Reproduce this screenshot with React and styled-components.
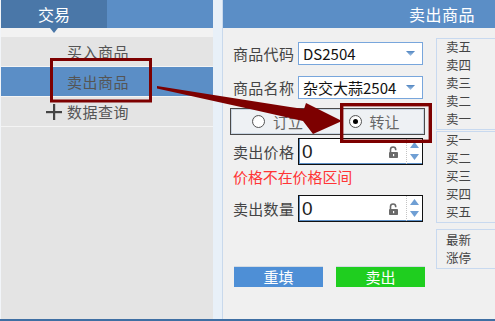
import styled, { createGlobalStyle } from "styled-components";

const COLORS = {
  headerBlue: "#5b8ec6",
  tabBlue: "#4a77a8",
  menuGray: "#e4e4e4",
  panelBg: "#f0f0f0",
  strip: "#e8f0f8",
  text: "#555",
  annotation: "#7d0000",
  quoteBorder: "#c8d9ef",
};

const GlobalStyle = createGlobalStyle`
  html, body {
    margin: 0;
    padding: 0;
    background: ${COLORS.strip};
  }
  body {
    font-family: "Noto Sans CJK SC", "Noto Sans", sans-serif;
  }
`;

const sellQuotes = ["卖五", "卖四", "卖三", "卖二", "卖一"];
const buyQuotes = ["买一", "买二", "买三", "买四", "买五"];

const DropTriangle = () => (
  <svg width="9" height="5" viewBox="0 0 9 5">
    <defs>
      <linearGradient id="dt" x1="0" y1="0" x2="0" y2="1">
        <stop offset="0" stopColor="#4f84c0" />
        <stop offset="1" stopColor="#a9c7e8" />
      </linearGradient>
    </defs>
    <polygon points="0,0 9,0 4.5,5" fill="url(#dt)" />
  </svg>
);

const OpenLock = () => (
  <svg width="11" height="12" viewBox="0 0 11 12">
    <path d="M2.5 6 V3.6 a2.6 2.6 0 0 1 5.2 0 V4.2" fill="none" stroke="#6a6a6a" strokeWidth="1.6" />
    <rect x="1" y="6" width="9" height="6" rx="0.8" fill="#6a6a6a" />
    <rect x="5" y="8" width="1.2" height="2.2" fill="#fff" />
  </svg>
);

const SpinArrow = ({ down }) => (
  <svg width="9" height="6" viewBox="0 0 9 6">
    <polygon points={down ? "0,0 9,0 4.5,6" : "0,6 9,6 4.5,0"} fill="#6f9fd4" />
  </svg>
);

const PlusIcon = () => (
  <svg width="16" height="16" viewBox="0 0 16 16">
    <rect x="0" y="7" width="16" height="2.2" fill="#444" />
    <rect x="7" y="0" width="2.2" height="16" fill="#444" />
  </svg>
);

const NumberInput = () => (
  <InputBox>
    <InputValue>0</InputValue>
    <LockSlot>
      <OpenLock />
    </LockSlot>
    <Spinner>
      <SpinArrow />
      <SpinArrow down />
    </Spinner>
  </InputBox>
);

const App = () => {
  return (
    <>
      <GlobalStyle />
      <Screen>
        <LeftPanel>
          <NavHeader>
            <NavTab>交易</NavTab>
          </NavHeader>
          <NavStrip />
          <MenuItem>买入商品</MenuItem>
          <MenuItem $selected>卖出商品</MenuItem>
          <MenuItem $withIcon>
            <PlusIcon />
            <span>数据查询</span>
          </MenuItem>
        </LeftPanel>

        <RightPanel>
          <RightHeader>卖出商品</RightHeader>
          <Body>
            <FormCol>
              <FormRow>
                <Label>商品代码</Label>
                <Select>
                  <span>DS2504</span>
                  <DropTriangle />
                </Select>
              </FormRow>
              <FormRow $gap={11}>
                <Label>商品名称</Label>
                <Select>
                  <span>杂交大蒜2504</span>
                  <DropTriangle />
                </Select>
              </FormRow>
              <RadioGroup>
                <RadioOption>
                  <RadioCircle />
                  订立
                </RadioOption>
                <RadioOption>
                  <RadioCircle $checked />
                  转让
                </RadioOption>
              </RadioGroup>
              <FormRow $gap={3} $tall>
                <Label>卖出价格</Label>
                <NumberInput />
              </FormRow>
              <ErrorText>价格不在价格区间</ErrorText>
              <FormRow $gap={9} $tall>
                <Label>卖出数量</Label>
                <NumberInput />
              </FormRow>
              <ButtonRow>
                <ActionButton $bg="#4e8fd6">重填</ActionButton>
                <ActionButton $bg="#1fce1f">卖出</ActionButton>
              </ButtonRow>
            </FormCol>

            <QuoteCol>
              <QuoteBox>
                {sellQuotes.map((q) => (
                  <QuoteRow key={q}>{q}</QuoteRow>
                ))}
              </QuoteBox>
              <QuoteBox $gap={1}>
                {buyQuotes.map((q) => (
                  <QuoteRow key={q}>{q}</QuoteRow>
                ))}
              </QuoteBox>
              <QuoteBox $gap={6} $padTop={2}>
                <QuoteRow>最新</QuoteRow>
                <QuoteRow>涨停</QuoteRow>
              </QuoteBox>
            </QuoteCol>
          </Body>
        </RightPanel>

        {/* red annotation drawn over the screenshot */}
        <Annotation viewBox="0 0 495 321">
          <rect x="51.5" y="59.5" width="99" height="41.5" fill="none" stroke={COLORS.annotation} strokeWidth="3" />
          <rect x="341.7" y="104.7" width="88.6" height="36.6" fill="none" stroke={COLORS.annotation} strokeWidth="3.4" />
          <polygon
            points="157,86 220,96 290,107 304,109 306,103 342,121 313,134 303,121 250,109 157,88.5"
            fill={COLORS.annotation}
          />
        </Annotation>
      </Screen>
    </>
  );
};

const Screen = styled.div`
  position: relative;
  display: flex;
  gap: 9px;
  width: 495px;
  height: 321px;
  box-sizing: border-box;
  border-bottom: 2px solid #3f6fa3;
  background: ${COLORS.strip};
  overflow: hidden;
`;

const LeftPanel = styled.div`
  width: 213px;
  flex-shrink: 0;
  display: flex;
  flex-direction: column;
  box-sizing: border-box;
  border-left: 1px solid #f2f5f9;
  background: ${COLORS.menuGray};
`;

const NavHeader = styled.div`
  display: flex;
  height: 28px;
  background: ${COLORS.headerBlue};
`;

const NavTab = styled.div`
  position: relative;
  width: 106px;
  display: flex;
  align-items: center;
  justify-content: center;
  background: ${COLORS.tabBlue};
  color: #fff;
  font-size: 16px;
  &::after {
    content: "";
    position: absolute;
    left: 50%;
    bottom: -5px;
    margin-left: -4px;
    border-top: 5px solid ${COLORS.tabBlue};
    border-left: 4px solid transparent;
    border-right: 4px solid transparent;
  }
`;

const NavStrip = styled.div`
  height: 9px;
  background: #f2f2f2;
`;

const MenuItem = styled.div`
  display: flex;
  align-items: center;
  gap: 5px;
  height: 29px;
  padding-left: ${(p) => (p.$withIcon ? 45 : 66)}px;
  border-bottom: 1px solid #f4f4f4;
  background: ${(p) => (p.$selected ? COLORS.headerBlue : COLORS.menuGray)};
  color: ${COLORS.text};
  font-size: 15px;
  letter-spacing: 0.5px;
`;

const RightPanel = styled.div`
  flex: 1;
  display: flex;
  flex-direction: column;
  border-left: 1px solid #c9d9ec;
  background: ${COLORS.panelBg};
`;

const RightHeader = styled.div`
  height: 28px;
  display: flex;
  align-items: center;
  justify-content: flex-end;
  padding-right: 20px;
  background: ${COLORS.headerBlue};
  color: #fff;
  font-size: 16px;
  letter-spacing: 0.5px;
`;

const Body = styled.div`
  flex: 1;
  display: flex;
`;

const FormCol = styled.div`
  width: 195px;
  flex-shrink: 0;
  display: flex;
  flex-direction: column;
  padding: 14px 0 0 7px;
`;

const FormRow = styled.div`
  display: flex;
  align-items: center;
  height: ${(p) => (p.$tall ? 27 : 23)}px;
  margin-top: ${(p) => p.$gap || 0}px;
  padding-left: 3px;
`;

const Label = styled.div`
  width: 65px;
  flex-shrink: 0;
  color: #444;
  font-size: 15px;
  letter-spacing: 0.3px;
`;

const Select = styled.div`
  width: 125px;
  height: 23px;
  box-sizing: border-box;
  display: flex;
  align-items: center;
  justify-content: space-between;
  padding: 0 7px 0 4px;
  border: 1px solid #78a6dc;
  background: #fff;
  color: #111;
  font-size: 15px;
`;

const RadioGroup = styled.div`
  display: flex;
  align-items: center;
  height: 27px;
  margin-top: 9px;
  box-sizing: border-box;
  border: 1px solid #4a4a4a;
  box-shadow: inset 0 0 0 1px #c9d5e2;
  background: #eef1f4;
`;

const RadioOption = styled.div`
  flex: 1;
  display: flex;
  align-items: center;
  gap: 8px;
  padding-left: 21px;
  color: #666;
  font-size: 15px;
`;

const RadioCircle = styled.span`
  position: relative;
  width: 13px;
  height: 13px;
  box-sizing: border-box;
  border-radius: 50%;
  border: 1px solid #555;
  background: radial-gradient(circle at 60% 60%, #fff 55%, #d8d8d8);
  &::after {
    content: "";
    display: ${(p) => (p.$checked ? "block" : "none")};
    position: absolute;
    left: 3px;
    top: 3px;
    width: 5px;
    height: 5px;
    border-radius: 50%;
    background: #000;
  }
`;

const InputBox = styled.div`
  width: 125px;
  height: 27px;
  box-sizing: border-box;
  display: flex;
  align-items: center;
  border: 1px solid #111;
  box-shadow: inset 1px 0 0 #5b8ec6, inset 0 -1px 0 #5b8ec6;
  background: #fff;
`;

const InputValue = styled.span`
  flex: 1;
  padding-left: 3px;
  color: #222;
  font-family: "Liberation Sans", Arial, sans-serif;
  font-size: 19px;
`;

const LockSlot = styled.span`
  display: flex;
  width: 18px;
`;

const Spinner = styled.div`
  height: 100%;
  width: 16px;
  box-sizing: border-box;
  display: flex;
  flex-direction: column;
  justify-content: space-between;
  align-items: center;
  padding: 3px 0 4px;
  border-left: 1px dotted #c4c4c4;
`;

const ErrorText = styled.div`
  margin-top: 3px;
  padding-left: 3px;
  height: 18px;
  line-height: 18px;
  color: #ff3535;
  font-size: 15px;
  letter-spacing: -0.1px;
`;

const ButtonRow = styled.div`
  display: flex;
  gap: 13px;
  margin-top: 44px;
  padding-left: 4px;
`;

const ActionButton = styled.button`
  width: 90px;
  height: 21px;
  padding: 0;
  border: none;
  border-top: 1px solid #d3dbe3;
  background: ${(p) => p.$bg};
  color: #fff;
  font-family: "Noto Sans CJK SC", sans-serif;
  font-size: 15px;
  line-height: 18px;
  cursor: pointer;
`;

const QuoteCol = styled.div`
  flex: 1;
  display: flex;
  flex-direction: column;
  margin-left: 11px;
  padding-top: 10px;
`;

const QuoteBox = styled.div`
  display: flex;
  flex-direction: column;
  margin-top: ${(p) => p.$gap || 0}px;
  padding: ${(p) => p.$padTop || 0}px 0 0 9px;
  border: 1px solid ${COLORS.quoteBorder};
  border-right: none;
`;

const QuoteRow = styled.div`
  height: 18px;
  box-sizing: border-box;
  padding-top: 1px;
  color: #444;
  font-size: 12.5px;
  line-height: 13px;
`;

const Annotation = styled.svg`
  position: absolute;
  left: 0;
  top: 0;
  width: 495px;
  height: 321px;
  pointer-events: none;
`;

export default App;
